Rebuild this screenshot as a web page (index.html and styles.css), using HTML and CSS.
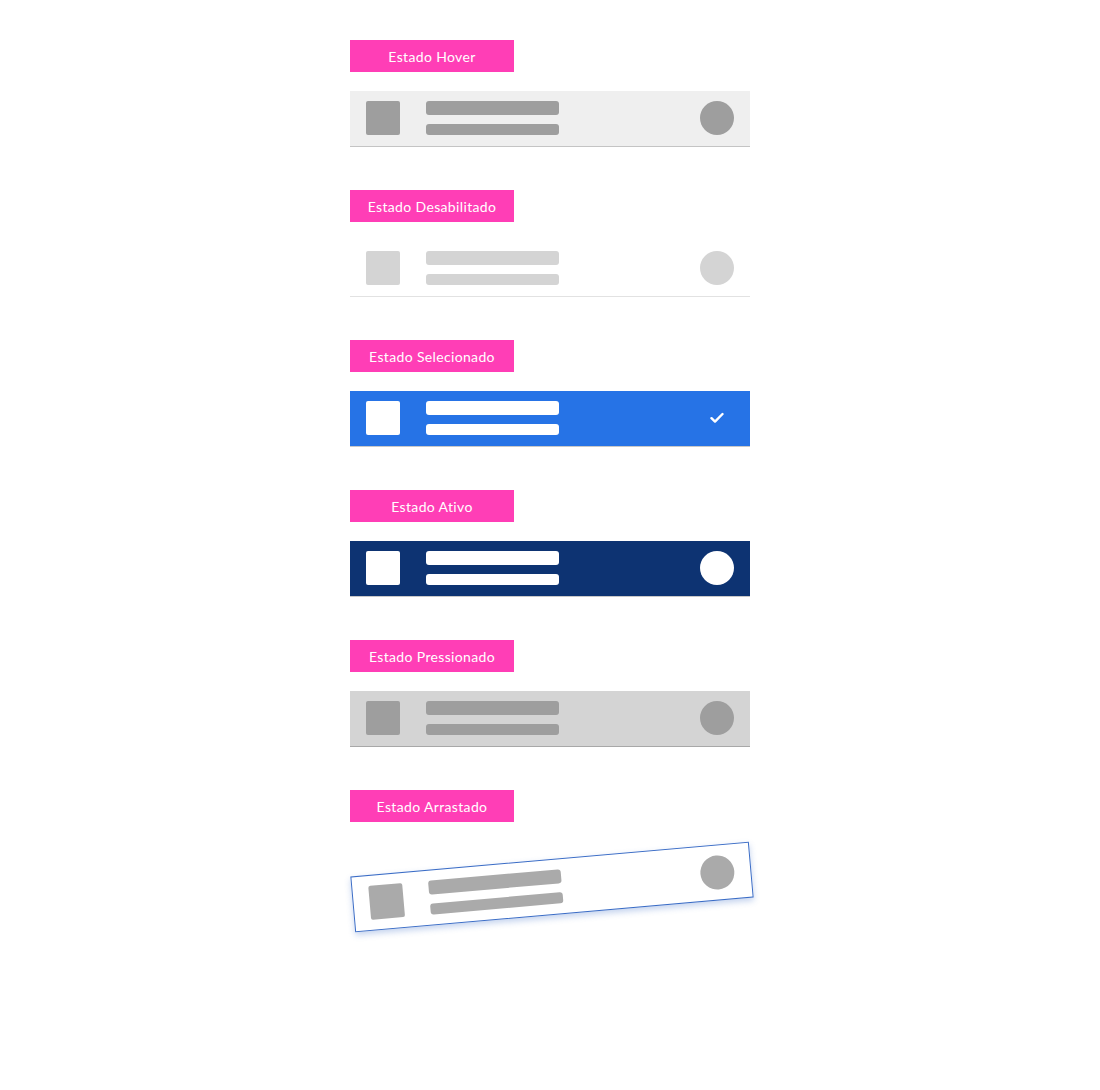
FILE: index.html
```html
<html>
  <head>
    <meta charset="utf-8" />
    <link rel="stylesheet" href="styles.css">
  </head>
  <body>
    <div class="states">
      <section class="state">
        <div class="tag">Estado Hover</div>
        <div class="item hover">
          <div class="thumb"></div>
          <div class="lines"><div class="line"></div><div class="line short"></div></div>
          <div class="dot"></div>
        </div>
      </section>

      <section class="state">
        <div class="tag">Estado Desabilitado</div>
        <div class="item disabled">
          <div class="thumb"></div>
          <div class="lines"><div class="line"></div><div class="line short"></div></div>
          <div class="dot"></div>
        </div>
      </section>

      <section class="state">
        <div class="tag">Estado Selecionado</div>
        <div class="item selected">
          <div class="thumb"></div>
          <div class="lines"><div class="line"></div><div class="line short"></div></div>
          <div class="check">
            <svg width="14" height="12" viewBox="0 0 14 12">
              <path d="M1.5 6.2 L5 9.6 L12.5 2" fill="none" stroke="white" stroke-width="2.4" stroke-linecap="round" stroke-linejoin="round"/>
            </svg>
          </div>
        </div>
      </section>

      <section class="state">
        <div class="tag">Estado Ativo</div>
        <div class="item active">
          <div class="thumb"></div>
          <div class="lines"><div class="line"></div><div class="line short"></div></div>
          <div class="dot"></div>
        </div>
      </section>

      <section class="state">
        <div class="tag">Estado Pressionado</div>
        <div class="item pressed">
          <div class="thumb"></div>
          <div class="lines"><div class="line"></div><div class="line short"></div></div>
          <div class="dot"></div>
        </div>
      </section>

      <section class="state">
        <div class="tag">Estado Arrastado</div>
        <div class="item dragged">
          <div class="thumb"></div>
          <div class="lines"><div class="line"></div><div class="line short"></div></div>
          <div class="dot"></div>
        </div>
      </section>
    </div>
  </body>
</html>
```

FILE: styles.css
```css
body {
  margin: 0;
  background: #fff;
  font-family: Lato, "Open Sans", sans-serif;
}

.states {
  width: 400px;
  margin: 0 auto;
  padding: 40px 0 0 0;
  display: flex;
  flex-direction: column;
  gap: 3px;
}

.state {
  height: 147px;
  display: flex;
  flex-direction: column;
  gap: 19px;
}

.tag {
  width: 164px;
  height: 32px;
  background: #ff3eb6;
  color: #fff;
  font-size: 14px;
  letter-spacing: 0.35px;
  line-height: 34px;
  text-align: center;
}

.item {
  height: 45px;
  border-bottom: 1px solid #c4c4c4;
  padding: 10px 16px 0 16px;
  display: flex;
  align-items: flex-start;
  box-sizing: content-box;
}

.thumb {
  width: 34px;
  height: 34px;
  border-radius: 2px;
  flex: none;
}

.lines {
  margin-left: 26px;
  width: 133px;
  display: flex;
  flex-direction: column;
  gap: 9px;
}

.line {
  height: 14px;
  border-radius: 3px;
}

.line.short {
  height: 11px;
}

.dot,
.check {
  margin-left: auto;
  width: 34px;
  height: 34px;
  border-radius: 50%;
  flex: none;
}

.check {
  display: flex;
  align-items: center;
  justify-content: center;
}

/* hover */
.hover { background: #efefef; }
.hover .thumb,
.hover .line,
.hover .dot { background: #9e9e9e; }

/* disabled */
.disabled { background: #fff; border-bottom-color: #e2e2e2; }
.disabled .thumb,
.disabled .line,
.disabled .dot { background: #d4d4d4; }

/* selected */
.selected { background: #2673e6; border-bottom-color: #c8c8c8; }
.selected .thumb,
.selected .line { background: #fff; }

/* active */
.active { background: #0d3372; border-bottom-color: #c8c8c8; }
.active .thumb,
.active .line,
.active .dot { background: #fff; }

/* pressed */
.pressed { background: #d4d4d4; border-bottom-color: #a8a8a8; }
.pressed .thumb,
.pressed .line,
.pressed .dot { background: #9e9e9e; }

/* dragged */
.dragged {
  height: 44px;
  padding-top: 10px;
  background: #fff;
  border: 1.5px solid #3a6cc6;
  box-shadow: 0 3px 6px rgba(58, 108, 198, 0.3);
  transform: translate(2px, 18px) rotate(-5deg);
}
.dragged .thumb,
.dragged .line,
.dragged .dot { background: #aaaaaa; }
```
